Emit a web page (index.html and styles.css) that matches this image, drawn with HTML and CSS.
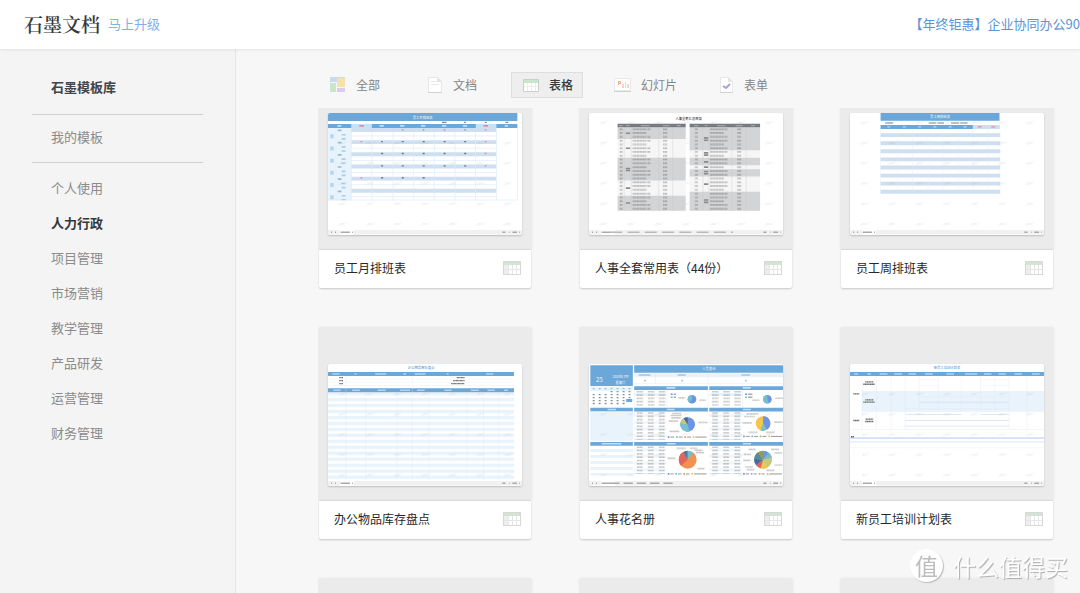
FILE: index.html
```html
<!DOCTYPE html>
<html lang="zh-CN">
<head>
<meta charset="utf-8">
<meta name="viewport" content="width=device-width, initial-scale=1">
<title>石墨模板库</title>
<link rel="stylesheet" href="styles.css">
</head>
<body>
<svg class="defs" aria-hidden="true">
  <defs>
    <pattern id="marks" width="83" height="61" patternUnits="userSpaceOnUse">
      <path d="M30 32l9-5 6 1 12-3M34 34l9-3M38 29l14 2" fill="none" stroke="#999" stroke-width="2" opacity=".16"/>
    </pattern>
    <pattern id="stripes" width="584" height="18" y="84" patternUnits="userSpaceOnUse">
      <rect width="560" height="10" fill="#e8f3fc"/>
    </pattern>
    <pattern id="ink" width="17" height="8" patternUnits="userSpaceOnUse">
      <path d="M0 2h4m1 0h3m2 0h5M1 5h5m2 0h3m2 0h3M3 0v8M9 0v8M14 0v8" stroke="#333" stroke-width="1.4" opacity=".55"/>
    </pattern>
    <g id="sheetbar">
      <rect y="352" width="584" height="14" fill="#f1f1f1"/>
      <rect x="36" y="352" width="42" height="14" fill="#fff"/>
      <path d="M9 359h3m9 0h3m14 0h28m6 0h3M525 359h9m12 0h2m7 0h14m6 0h2" stroke="#aaa" stroke-width="4"/>
    </g>
    <g id="rows3">
      <rect y="6" width="96" height="9" fill="#e8f3fc"/>
      <path d="M17 0v44M51 0v44M84 0v44" stroke="url(#ink)" stroke-width="20" stroke-dasharray="5 5"/>
    </g>
    <g id="rows8">
      <path d="M0 10h97M0 30h97M0 50h97M0 70h97" stroke="#f0f6fc" stroke-width="9"/>
      <path d="M0 82h97" stroke="#c3dcf0" stroke-width="2"/>
      <path d="M17 0v82M50 0v82M83 0v82" stroke="url(#ink)" stroke-width="18" stroke-dasharray="5 5"/>
    </g>
    <symbol id="sheet" viewBox="0 0 18 14">
      <rect x=".5" y=".5" width="17" height="13" fill="#fff" stroke="#d8d8d8"/>
      <rect x="1" y="4" width="4" height="9" fill="#eeeeee"/>
      <rect x="1" y="1" width="16" height="3" fill="#d0e6d2"/>
      <path d="M5.500 4v9M9.500 4v9M13.500 4v9M1 8.500h16" stroke="#e6e6e6" fill="none"/>
    </symbol>
  </defs>
</svg>

<header class="topbar">
  <a class="logo" href="#">石墨文档</a>
  <a class="upgrade" href="#">马上升级</a>
  <a class="promo" href="#">【年终钜惠】企业协同办公90</a>
</header>

<div class="layout">
  <nav class="sidebar">
    <h1 class="sidebar-title">石墨模板库</h1>
    <a class="mine" href="#">我的模板</a>
    <ul class="categories">
      <li><a href="#">个人使用</a></li>
      <li><a class="current" href="#">人力行政</a></li>
      <li><a href="#">项目管理</a></li>
      <li><a href="#">市场营销</a></li>
      <li><a href="#">教学管理</a></li>
      <li><a href="#">产品研发</a></li>
      <li><a href="#">运营管理</a></li>
      <li><a href="#">财务管理</a></li>
    </ul>
  </nav>

  <main class="content">
    <div class="tabs">
      <button class="tab" type="button">
        <svg class="tab-icon" viewBox="0 0 18 18"><path fill="#c6daf1" d="M1 2h7v4H1z"/><path fill="#f5e2ab" d="M8 2h8v9H8z"/><path fill="#c9e6cb" d="M1 7h6v9H1z"/><path fill="#d8cdea" d="M8 12h8v4H8z"/><path stroke="#cfdcdc" d="M1 1.500h15"/></svg>全部
      </button>
      <button class="tab" type="button">
        <svg class="tab-icon" viewBox="0 0 18 18"><path fill="#fff" stroke="#e6e6e6" d="M2.500 1.500h9l4 4v11h-13z"/><path fill="#e4e4e4" d="M11 1v5h5z"/><path stroke="#e8e8e8" d="M5 5.500h5M5 8.500h8"/><path stroke="#d2d2d2" d="M2 16.500h14"/></svg>文档
      </button>
      <button class="tab tab-active" type="button">
        <svg class="tab-icon" viewBox="0 0 18 18"><path fill="#fff" stroke="#cbcfcb" d="M1.500 3.500h15v12h-15z"/><path fill="#c9e5cc" d="M2 4h14v3H2z"/><path stroke="#ececec" d="M5.500 7v8M9.500 7v8M13.500 7v8M2 10.500h14"/></svg>表格
      </button>
      <button class="tab" type="button">
        <svg class="tab-icon" viewBox="0 0 18 18"><path fill="#fff" stroke="#ebe8e7" d="M.5 2.500h16v12H.5z"/><path stroke="#d2d0cf" d="M0 15.500h17"/><path fill="none" stroke="#eea78b" d="M4.500 9V5.500h2v2h-2"/><path fill="#f6d4c5" d="M8 8h2v4H8zM11 6h1v6h-1zM13 8h2v4h-2z"/></svg>幻灯片
      </button>
      <button class="tab" type="button">
        <svg class="tab-icon" viewBox="0 0 18 18"><path fill="#fff" stroke="#e8e8e8" d="M3.500 1.500h8l4 4v11h-12z"/><path fill="#e6e6e6" d="M11 1v5h5z"/><path fill="none" stroke="#a99fdc" stroke-width="2" d="M6 10l3 2 4-4"/><path stroke="#d2d2d2" d="M3 16.500h13"/></svg>表单
      </button>
    </div>

    <div class="scroller">
      <div class="cards">
        <article class="card">
          <div class="preview">
            <svg class="thumb" viewBox="0 0 584 366">
              <path fill="#e8f3fc" d="M0 45h70v218H0z"/>
              <path fill="#6ba7d8" d="M0 0h570v24H0zM0 33h570v12H0z"/>
              <path fill="#cddff0" d="M70 33h62v12H70zM445 33h62v12h-62zM70 45h437v12H70zM70 82h437v11H70zM70 118h437v12H70zM70 155h437v12H70zM70 192h437v11H70zM70 228h437v12H70z"/>
              <path fill="none" stroke="#dcebf8" stroke-width="2" d="M24 45v218M70 57v206M132 57v206M196 57v206M258 57v206M320 57v206M382 57v206M444 57v206M507 45v218M570 45v218M0 262h570M70 69h437M70 106h437M70 143h437M70 179h437M70 216h437M70 252h437"/>
              <text class="sheet-title light" x="285" y="17">员工月排班表</text>
              <path d="M28 39h12M155 39h13M217 39h13M280 39h13M343 39h13M406 39h13M532 39h10" stroke="#c4ddf1" stroke-width="5"/>
              <path d="M94 39h14M468 39h14" stroke="#e68a96" stroke-width="5"/>
              <path d="M343 28h14M409 28h6M472 28h6M534 28h9" stroke="#888" stroke-width="4"/>
              <path d="M222 51h5M285 51h5M348 51h5M410 51h5" stroke="#8d99a6" stroke-width="4"/>
              <path d="M160 86h5M222 86h6M285 86h6M348 86h6M410 86h6M160 122h6M222 122h6M285 122h6M348 122h6M410 122h6M160 159h6M222 159h6M285 159h6M348 159h6M410 159h6M160 195h6M222 195h6M285 195h6" stroke="#6b7580" stroke-width="4"/>
              <path d="M98 86h5M472 51h5M472 86h5M472 122h5M472 159h5M98 195h5" stroke="#df8d99" stroke-width="4"/>
              <path d="M47 63v200" stroke="#a9cdea" stroke-width="12" stroke-dasharray="5 7.300 5 19.400"/>
              <path d="M12 64v200" stroke="#b4d3ec" stroke-width="10" stroke-dasharray="12 24.700"/>
              <path d="M35 50v200" stroke="#8bbce2" stroke-width="11" stroke-dasharray="5 31.700"/>
              <path fill="url(#marks)" d="M0 60h584v290H0z"/>
              <use href="#sheetbar"/>
            </svg>
          </div>
          <div class="card-foot"><h2>员工月排班表</h2><svg class="type-icon"><use href="#sheet"/></svg></div>
        </article>

        <article class="card">
          <div class="preview">
            <svg class="thumb" viewBox="0 0 584 366">
              <path fill="url(#marks)" d="M0 0h584v350H0z"/>
              <text class="sheet-title dark" x="300" y="20">人事全套汇总目录</text>
              <path fill="#f6f6f6" d="M86 32h205v262H86zM303 32h212v262H303z"/>
              <path fill="#d2d4d6" d="M86 43h205v35H86zM86 135h205v68H86zM86 249h205v45H86zM303 43h212v69H303zM303 135h212v22H303zM303 169h212v22H303zM303 237h212v57H303z"/>
              <path stroke="#c2c4c6" d="M106 43v251M127 43v251M210 43v251M252 43v251M343 43v251M361 43v251M430 43v251M473 43v251"/>
              <path fill="#777b80" d="M86 32h205v11H86zM303 32h212v11H303z"/>
              <path stroke="#a0a4a8" stroke-width="4" d="M90 38h12M112 38h10M156 38h27M222 38h20M264 38h12M316 38h13M348 38h9M385 38h26M441 38h22M488 38h12"/>
              <path stroke="url(#ink)" stroke-width="9" stroke-dasharray="6 5.400" d="M97 46v246M323 46v246"/>
              <path stroke="url(#ink)" stroke-width="42" stroke-dasharray="6 5.400" d="M152 46v246M385 46v246"/>
              <path stroke="url(#ink)" stroke-width="10" stroke-dasharray="6 16.800 6 5.400" d="M180 46v246M412 46v246"/>
              <path stroke="url(#ink)" stroke-width="13" stroke-dasharray="6 5.400" d="M229 46v246M452 46v246"/>
              <path stroke="#8a8a8a" stroke-width="5" d="M111 61h13M111 106h13M111 167h13M111 173h13M111 226h13M111 271h13M346 75h13M346 82h13M346 120h13M346 127h13M346 147h13M346 163h13M346 176h13M346 183h13M346 214h13M346 262h13M346 269h13"/>
              <use href="#sheetbar"/>
              <path stroke="#bbb" stroke-width="4" stroke-dasharray="36 16" d="M64 359h370"/>
            </svg>
          </div>
          <div class="card-foot"><h2>人事全套常用表（44份）</h2><svg class="type-icon"><use href="#sheet"/></svg></div>
        </article>

        <article class="card">
          <div class="preview">
            <svg class="thumb" viewBox="0 0 584 366">
              <path fill="#6ba7d8" d="M92 0h358v23H92zM92 36h278v12H92z"/>
              <path fill="#cddff0" d="M370 36h81v12h-81zM92 61h360v11H92zM92 85h360v12H92zM92 109h360v12H92zM92 134h360v11H92zM92 158h360v12H92zM92 183h360v11H92zM92 207h360v11H92zM92 231h360v12H92z"/>
              <path fill="none" stroke="#dfebf7" d="M92 48v195M144 48v195M188 48v195M235 48v195M279 48v195M325 48v195M370 48v195M415 48v195M451 48v195"/>
              <text class="sheet-title light" x="271" y="16">员工周排班表</text>
              <path stroke="#aaa" stroke-width="4" d="M106 30h23M237 30h23M263 30h20M304 30h25M332 30h22"/>
              <path stroke="#b9d6ee" stroke-width="4" d="M112 42h9M159 42h9M205 42h9M251 42h9M297 42h9M342 42h9"/>
              <path stroke="#e88f9a" stroke-width="4" d="M385 42h11M425 42h12"/>
              <path fill="url(#marks)" d="M0 0h584v350H0z"/>
              <use href="#sheetbar"/>
            </svg>
          </div>
          <div class="card-foot"><h2>员工周排班表</h2><svg class="type-icon"><use href="#sheet"/></svg></div>
        </article>

        <article class="card">
          <div class="preview">
            <svg class="thumb" viewBox="0 0 584 366">
              <text class="sheet-title blue" x="280" y="16">办公物品库存盘点</text>
              <path fill="url(#stripes)" d="M0 85h560v263H0z"/>
              <path fill="#6ba7d8" d="M0 24h560v12H0zM0 73h560v12H0z"/>
              <path stroke="#dceaf6" d="M54 36v312M113 85v263M208 85v263M254 36v312M304 85v263M419 85v263M468 85v263M514 85v263M0 46h560M0 55h560M0 65h560"/>
              <path stroke="#b4d3ed" stroke-width="5" d="M13 30h22M80 30h6M142 30h33M227 30h8M261 30h33M357 30h6M476 30h22M16 79h22M73 79h23M149 79h25M217 79h30M268 79h23M350 79h22M430 79h24M480 79h22M530 79h12"/>
              <path stroke="#666" stroke-width="4" stroke-dasharray="3 1" d="M34 41h12M34 50h12M34 59h12M388 41h23M377 50h34M371 59h40"/>
              <path fill="url(#marks)" d="M0 66h584v284H0z"/>
              <use href="#sheetbar"/>
            </svg>
          </div>
          <div class="card-foot"><h2>办公物品库存盘点</h2><svg class="type-icon"><use href="#sheet"/></svg></div>
        </article>

        <article class="card">
          <div class="preview">
            <svg class="thumb" viewBox="0 0 584 366">
              <path fill="#6ba7d8" d="M4 4h128v62H4zM136 4h448v22H136zM136 67h222v11H136zM362 67h222v11H362zM4 132h128v11H4zM136 132h222v11H136zM362 132h222v11H362zM4 235h128v11H4zM136 235h222v11H136zM362 235h222v11H362z"/>
              <path fill="#e8f3fc" d="M136 28h448v12H136zM4 143h128v88H4zM4 256h128v9H4zM4 274h128v9H4zM4 292h128v9H4zM4 310h128v9H4zM4 328h128v8H4zM4 68h128v11H4z"/>
              <path fill="none" stroke="#cfe2f3" d="M136 59h448M200 28v31M358 28v31M4 79h128M136 78v52M358 78v52M235 78v52M462 78v52"/>
              <text class="day" x="31" y="53">25</text>
              <text class="sheet-title light" x="95" y="42">2020年7月</text>
              <text class="sheet-title light" x="95" y="61">星期六</text>
              <text class="sheet-title light" x="361" y="19">人员变动</text>
              <path stroke="#9cc6e8" stroke-width="5" d="M150 33h35M267 33h24M459 33h26M166 50h5M278 50h5M470 50h5"/>
              <path stroke="#c4ddf1" stroke-width="5" d="M233 72h27M463 72h24M56 137h25M234 137h24M463 137h24M38 240h59M234 240h27M463 240h25"/>
              <path stroke="#b5bbc2" stroke-width="4" stroke-dasharray="6 12" d="M11 74h118"/>
              <path stroke="#8a9199" stroke-width="4" stroke-dasharray="6 12" d="M65 83h66M11 92h118M11 101h118M11 110h118M11 119h100"/>
              <path stroke="#6ba7d8" stroke-width="9" d="M112 110h18"/>
              <use href="#rows3" x="136" y="81"/><use href="#rows3" x="363" y="81"/>
              <use href="#rows8" x="136" y="145"/><use href="#rows8" x="363" y="145"/>
              <use href="#rows8" x="136" y="248"/><use href="#rows8" x="363" y="248"/>
              <g stroke-width="4"><path stroke="#6a92e6" d="M246 91h6M470 91h6"/><path stroke="#6fc3c5" d="M246 100h6M470 100h6"/><path stroke="#aaa" d="M255 91h7M255 100h7M479 91h13M479 100h13"/></g>
              <circle cx="310" cy="106" r="13" fill="#6c94e6"/><path fill="#75c0ca" d="M310 106V93a13 13 0 0 0-7 24z"/>
              <circle cx="537" cy="106" r="13" fill="#6c94e6"/><path fill="#75c0ca" d="M537 106V93a13 13 0 1 0 5 25z"/>
              <circle cx="297" cy="182" r="22" fill="#6c94e6"/><path fill="#75c0ca" d="M297 182l-22-3a22 22 0 0 0 28 24z"/><path fill="#c9c96f" d="M297 182l-22-3a22 22 0 0 1 10-16z"/><path fill="#46689e" d="M297 182l-12-19a22 22 0 0 1 12-3z"/>
              <circle cx="524" cy="179" r="22" fill="#f3c64c"/><path fill="#6c94e6" d="M524 179v-22a22 22 0 0 1 11 41z"/><path fill="#75c0ca" d="M524 179l11 19a22 22 0 0 1-19 2z"/>
              <circle cx="297" cy="288" r="27" fill="#f49150"/><path fill="#e0655e" d="M297 288l-20 18a27 27 0 0 1 7-41z"/><path fill="#4a70a8" d="M297 288l-13-23a27 27 0 0 1 13-4z"/><path fill="#75c0ca" d="M297 288v-27a27 27 0 0 1 17 6z"/>
              <circle cx="524" cy="288" r="27" fill="#c5c979"/><path fill="#6c94e6" d="M524 288v-27a27 27 0 0 1 18 7z"/><path fill="#75c0ca" d="M524 288l18-20a27 27 0 0 1 9 14z"/><path fill="#f3c64c" d="M524 288l13 24a27 27 0 0 1-20 2z"/><path fill="#e0655e" d="M524 288l-7 26a27 27 0 0 1-14-9z"/><path fill="#466aa3" d="M524 288l-21 17a27 27 0 0 1-6-20z"/><path fill="#568e96" d="M524 288l-27-3a27 27 0 0 1 12-19z"/><path fill="#92995b" d="M524 288l-15-22a27 27 0 0 1 15-5z"/>
              <path stroke="url(#ink)" stroke-width="5" d="M268 102h22M332 109h20M491 109h22M560 103h24M250 149h28M246 155h32M248 162h28M240 172h28M242 203h30M328 176h30M474 150h36M466 158h34M462 177h28M557 175h26M480 206h26M533 206h26M264 254h28M304 254h22M318 260h24M322 267h24M236 284h24M326 315h22M480 257h22M548 257h24M466 272h22M464 290h22M470 310h24M474 318h24M534 320h24M558 268h24M558 304h24"/>
              <g stroke-width="5"><path stroke="#6c94e6" d="M237 220h5M464 218h5M237 331h5M464 331h5"/><path stroke="#75c0ca" d="M262 220h5M489 218h5M260 331h5M487 331h5"/><path stroke="#b5ba57" d="M287 220h5M514 218h5M284 331h5M511 331h5"/><path stroke="#f3c64c" d="M312 220h5M540 218h5M308 331h5M535 331h5"/><path stroke="#999" stroke-width="3" d="M245 220h12M270 220h12M295 220h12M320 220h34M472 218h12M497 218h12M522 218h12M548 218h34M245 331h10M268 331h10M292 331h10M316 331h38M472 331h10M495 331h10M519 331h10M543 331h38"/></g>
              <path fill="url(#marks)" d="M0 143h584v207H0z"/>
              <use href="#sheetbar"/>
              <path stroke="#aaa" stroke-width="4" stroke-dasharray="28 12" d="M64 359h200"/>
            </svg>
          </div>
          <div class="card-foot"><h2>人事花名册</h2><svg class="type-icon"><use href="#sheet"/></svg></div>
        </article>

        <article class="card">
          <div class="preview">
            <svg class="thumb" viewBox="0 0 584 366">
              <text class="sheet-title blue" x="292" y="16">新员工培训计划表</text>
              <path fill="#6ba7d8" d="M0 24h584v12H0z"/>
              <path fill="#e8f3fc" d="M36 81h548v63H36z"/>
              <path fill="none" stroke="#dbe8f5" d="M36 36v162M79 36v162M124 36v162M166 36v162M208 36v108M266 36v108M335 36v108M393 36v108M436 36v108M479 36v162M533 36v162M0 197h584M208 47h58M208 64h58M393 47h86M393 64h86M208 99h271M166 135h313M0 252h584"/>
              <path fill="none" stroke="#ccdcf2" stroke-width="2" d="M208 115h271M166 152h170M393 152h86M166 170h313M166 187h313"/>
              <path stroke="#a9caf0" stroke-width="3" d="M0 223h584"/><path stroke="#e3eefb" stroke-width="5" d="M0 234h584"/>
              <path stroke="#b4d3ed" stroke-width="4" d="M13 30h11M52 30h11M89 30h24M133 30h24M176 30h23M226 30h23M290 30h23M346 30h37M403 30h23M447 30h22M495 30h23M548 30h23"/>
              <path stroke="#666" stroke-width="4" stroke-dasharray="4 1" d="M10 90h18M10 170h18M46 54h24M40 61h35M46 108h24M40 115h35M47 166h23M46 173h24M3 219h10"/>
              <path fill="url(#marks)" d="M36 60h548v290H36z"/>
              <use href="#sheetbar"/>
            </svg>
          </div>
          <div class="card-foot"><h2>新员工培训计划表</h2><svg class="type-icon"><use href="#sheet"/></svg></div>
        </article>

        <article class="card"><div class="preview"></div></article>
        <article class="card"><div class="preview"></div></article>
        <article class="card"><div class="preview"></div></article>
      </div>
    </div>
  </main>
</div>

<div class="stamp"><span class="stamp-seal">值</span><span>什么值得买</span></div>
</body>
</html>
```
FILE: styles.css
```css
* { box-sizing: border-box; }

body {
  margin: 0;
  height: 100vh;
  display: flex;
  flex-direction: column;
  overflow: hidden;
  background: #f7f7f7;
  color: #2f3438;
  font-family: "Noto Sans CJK SC", "Noto Sans", sans-serif;
  font-size: 13px;
}

a { color: inherit; text-decoration: none; }
ul { list-style: none; margin: 0; padding: 0; }
h1, h2 { margin: 0; }

.defs { position: absolute; width: 0; height: 0; }

.topbar {
  flex: none;
  position: relative;
  display: flex;
  align-items: center;
  height: 49px;
  padding: 0 0 2px 24px;
  background: #fff;
  box-shadow: 0 1px 3px rgba(0, 0, 0, .08);
}
.logo {
  margin-right: 8px;
  font-family: "Noto Serif CJK SC", "Noto Sans CJK SC", serif;
  font-size: 19px;
  font-weight: 600;
  color: #33383c;
}
.upgrade { color: #83aeea; }
.promo {
  flex: 0 0 166px;
  margin-left: auto;
  white-space: nowrap;
  color: #5b93d3;
}

.layout { flex: 1; display: flex; min-height: 0; }

.sidebar {
  flex: 0 0 236px;
  padding: 15px 32px 0;
  background: #f4f4f4;
  border-right: 1px solid #e4e4e4;
  color: #8b8b8b;
}
.sidebar-title {
  padding-left: 19px;
  font-size: 13px;
  font-weight: 700;
  line-height: 46px;
  height: 50px;
  color: #41464b;
}
.mine {
  display: block;
  padding: 0 0 4px 19px;
  line-height: 43px;
  border-top: 1px solid #d0d0d0;
  border-bottom: 1px solid #d0d0d0;
}
.categories { padding: 7px 0 0 19px; }
.categories a { display: block; line-height: 35px; }
.categories .current { color: #33383c; font-weight: 700; }

.content {
  flex: 1;
  min-width: 0;
  display: flex;
  flex-direction: column;
  padding-left: 82px;
}
.tabs {
  flex: none;
  display: grid;
  grid-template-columns: 97px 96px 92px 103px 72px;
  justify-items: start;
  padding: 23px 0 10px;
}
.tab {
  display: flex;
  align-items: center;
  gap: 9px;
  height: 26px;
  padding: 0 9px 2px 10px;
  border: 1px solid transparent;
  background: none;
  color: #858585;
  font: inherit;
  font-size: 12px;
  white-space: nowrap;
}
.tab-active { background: #eee; border-color: #dedede; color: #33383c; font-weight: 500; }
.tab-icon { width: 18px; height: 18px; margin-top: 2px; }

.scroller { flex: 1; min-height: 0; overflow: hidden; }
.cards {
  display: grid;
  grid-template-columns: repeat(auto-fill, 214px);
  gap: 39px 47px;
  margin-top: -32px;
}
.card { border-radius: 3px; }
.preview {
  height: 173px;
  padding: 37px 10px 0;
  background: #ebebeb;
  border-radius: 3px 3px 0 0;
  box-shadow: 0 0 3px rgba(0, 0, 0, .06);
}
.thumb {
  display: block;
  width: 100%;
  background: #fff;
  border-radius: 2px;
  box-shadow: 0 1px 2px rgba(0, 0, 0, .2);
}
.sheet-title { font-size: 10px; font-weight: 500; text-anchor: middle; }
.light { fill: #e6f2fb; }
.dark { fill: #333; }
.blue { fill: #5f9fd4; }
.day { font-size: 19px; fill: #e6f2fb; text-anchor: middle; }

.card-foot {
  position: relative;
  display: flex;
  align-items: center;
  justify-content: space-between;
  height: 39px;
  margin: 0 1px;
  padding: 0 10px 2px 15px;
  background: #fff;
  border-top: 1px solid #dadada;
  border-radius: 0 0 2px 2px;
  box-shadow: 0 1px 2px rgba(0, 0, 0, .2);
}
.card-foot h2 { padding-bottom: 2px; font-size: 12px; font-weight: 400; color: #24282b; }
.type-icon { width: 18px; height: 14px; }

.stamp {
  position: fixed;
  right: 12px;
  bottom: 11px;
  display: flex;
  align-items: center;
  gap: 10px;
  line-height: 32px;
  font-size: 23px;
  color: #fff;
  text-shadow: 1px 1px 1px #aaa;
}
.stamp-seal {
  width: 33px;
  height: 33px;
  border-radius: 50%;
  background: #fff;
  box-shadow: 1px 1px 1px #bbb;
  color: #bdbdbd;
  text-align: center;
  text-shadow: none;
}
```
